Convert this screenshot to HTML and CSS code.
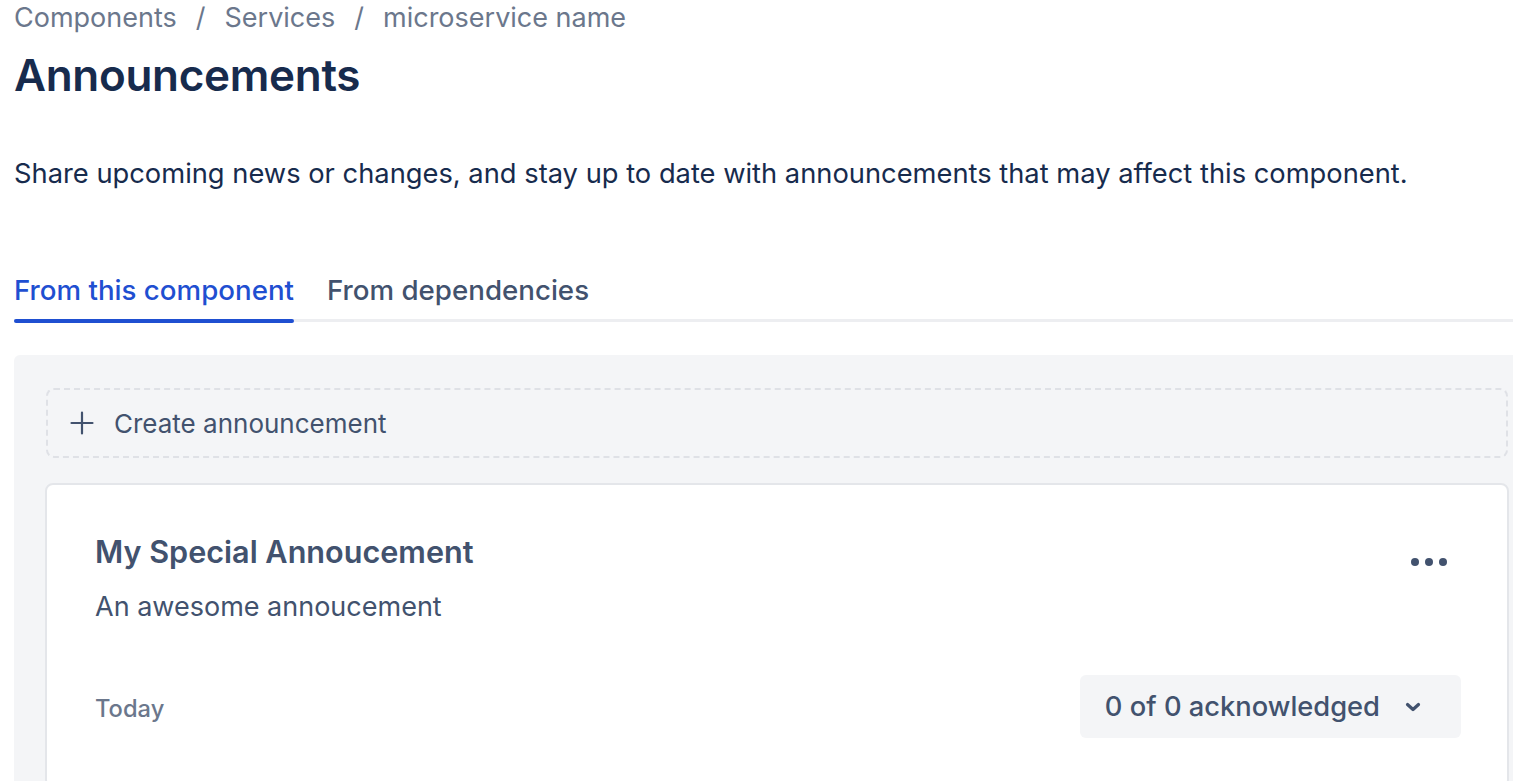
FILE: index.html
```html
<!DOCTYPE html>
<html lang="en">
<head>
<meta charset="utf-8">
<title>Announcements</title>
<link rel="stylesheet" href="styles.css">
</head>
<body>
<div class="page">
  <nav class="breadcrumbs">
    <span class="crumb">Components</span>
    <span class="sep">/</span>
    <span class="crumb">Services</span>
    <span class="sep">/</span>
    <span class="crumb">microservice name</span>
  </nav>
  <h1 class="title">Announcements</h1>
  <p class="intro">Share upcoming news or changes, and stay up to date with announcements that may affect this component.</p>

  <div class="tabs">
    <div class="tab tab-active">From this component</div>
    <div class="tab">From dependencies</div>
  </div>

  <section class="panel">
    <button class="create">
      <svg class="plus" width="24" height="24" viewBox="0 0 24 24" aria-hidden="true">
        <path d="M12 1.5v21M1.5 12h21" stroke="#42526E" stroke-width="2.2" fill="none" stroke-linecap="round"/>
      </svg>
      <span>Create announcement</span>
    </button>

    <article class="card">
      <div class="card-head">
        <h2 class="card-title">My Special Annoucement</h2>
        <div class="more" aria-label="More">
          <span class="dot"></span><span class="dot"></span><span class="dot"></span>
        </div>
      </div>
      <p class="card-desc">An awesome annoucement</p>
      <div class="card-foot">
        <span class="date">Today</span>
        <button class="ack">
          <span>0 of 0 acknowledged</span>
          <svg width="16" height="10" viewBox="0 0 16 10" aria-hidden="true">
            <path d="M2.5 2.5L8 7.5l5.5-5" stroke="#42526E" stroke-width="3.2" fill="none" stroke-linecap="round" stroke-linejoin="round"/>
          </svg>
        </button>
      </div>
    </article>
  </section>
</div>
</body>
</html>
```

FILE: styles.css
```css
html, body {
  margin: 0;
  padding: 0;
  background: #ffffff;
}

body {
  font-family: Inter, "Noto Sans", "Liberation Sans", sans-serif;
  color: #172B4D;
  overflow: hidden;
}

.page {
  width: 1526px;
  padding-left: 14px;
}

.breadcrumbs {
  height: 36px;
  line-height: 36px;
  font-size: 27px;
  color: #6B778C;
  display: flex;
  gap: 19px;
}

.title {
  margin: 11px 0 0;
  font-size: 44px;
  line-height: 56px;
  font-weight: 600;
  color: #172B4D;
  letter-spacing: -0.3px;
}

.intro {
  margin: 51px 0 0;
  font-size: 27.3px;
  line-height: 40px;
  color: #172B4D;
}

.tabs {
  margin-top: 76px;
  display: flex;
  gap: 33px;
  background: linear-gradient(#EDEEF1, #EDEEF1) left calc(100% - 1px) / 100% 3px no-repeat;
}

.tab {
  font-size: 27.7px;
  line-height: 40px;
  font-weight: 500;
  color: #42526E;
  padding-bottom: 13px;
}

.tab-active {
  color: #1F4FD1;
  padding-bottom: 0;
}

.tab-active::after {
  content: "";
  display: block;
  height: 4px;
  margin-top: 9px;
  border-radius: 2px;
  background: #1F4FD1;
}

.panel {
  margin-top: 32px;
  background: #F4F5F7;
  border-top-left-radius: 6px;
  padding: 33px 32px 40px;
}

.create {
  display: flex;
  align-items: center;
  gap: 20px;
  width: 100%;
  height: 70px;
  box-sizing: border-box;
  padding: 0 0 0 22px;
  border: 2px dashed #DFE1E6;
  border-radius: 8px;
  background: transparent;
  font-family: inherit;
  font-size: 26px;
  color: #42526E;
  text-align: left;
}

.plus {
  flex: none;
}

.card {
  margin-top: 25px;
  margin-left: -1px;
  margin-right: -1px;
  background: #ffffff;
  border: 2px solid #E4E6EA;
  border-radius: 8px;
  padding: 47px 46px 48px 48px;
}

.card-head {
  display: flex;
  justify-content: space-between;
  align-items: flex-start;
}

.card-title {
  margin: 0;
  font-size: 30.6px;
  line-height: 40px;
  font-weight: 600;
  color: #42526E;
}

.more {
  display: flex;
  gap: 6px;
  padding: 26px 14px 0 0;
}

.dot {
  width: 8px;
  height: 8px;
  border-radius: 50%;
  background: #42526E;
}

.card-desc {
  margin: 17px 0 0;
  font-size: 27px;
  line-height: 36px;
  color: #42526E;
}

.card-foot {
  margin-top: 50px;
  display: flex;
  justify-content: space-between;
  align-items: center;
}

.date {
  font-size: 23.7px;
  font-weight: 500;
  color: #6B778C;
  margin-top: 3px;
}

.ack {
  display: flex;
  align-items: center;
  gap: 25px;
  height: 63px;
  padding: 0 40px 0 25px;
  border: none;
  border-radius: 6px;
  background: #F4F5F7;
  font-family: inherit;
  font-size: 27.3px;
  font-weight: 500;
  color: #42526E;
}
```
